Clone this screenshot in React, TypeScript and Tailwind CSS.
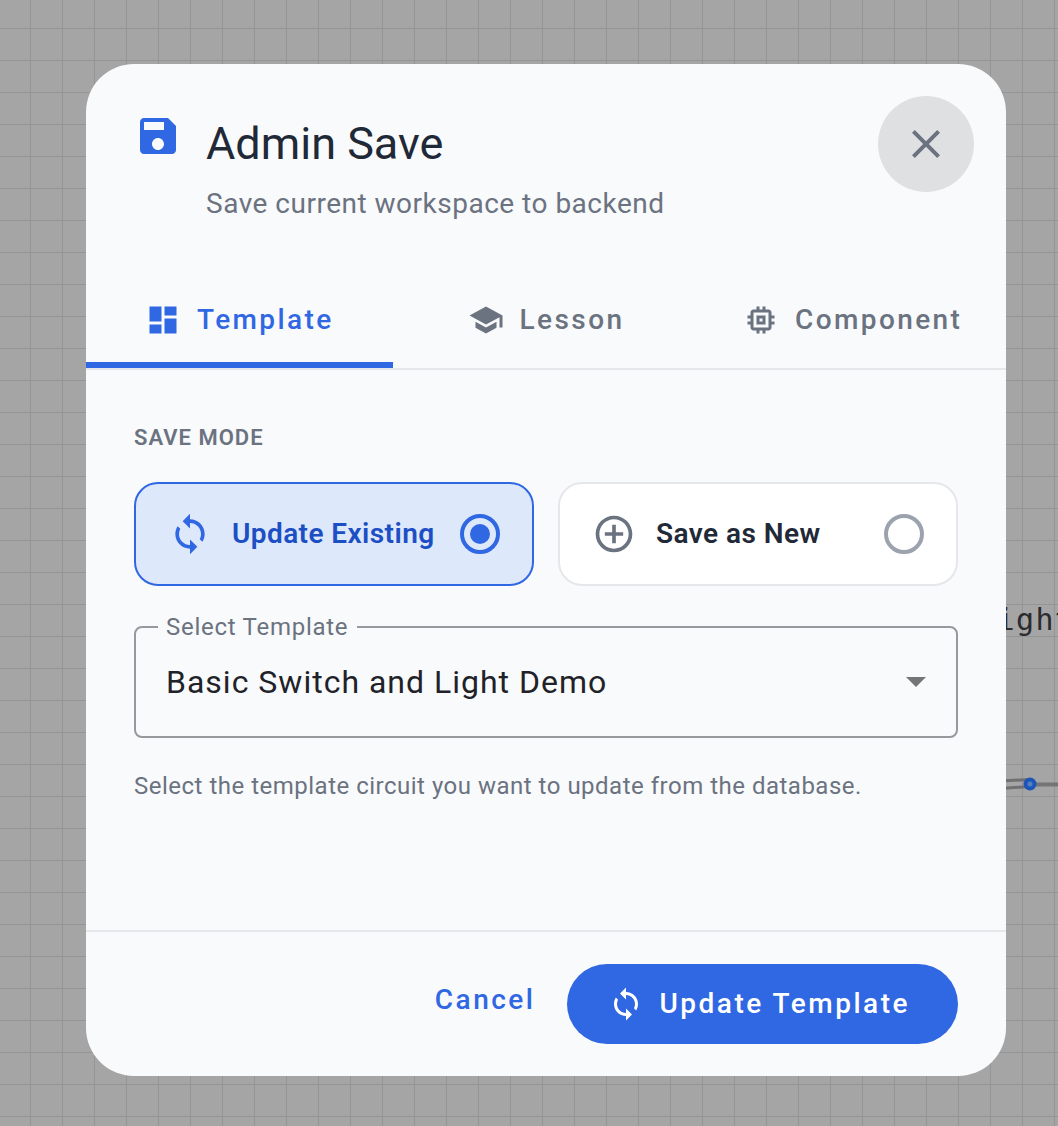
const font = { fontFamily: 'Roboto, sans-serif' };

const Icon = ({ d, className }: { d: string; className: string }) => (
  <svg viewBox="0 0 24 24" fill="currentColor" className={className}>
    <path d={d} />
  </svg>
);

const saveIcon =
  'M17 3H5c-1.11 0-2 .9-2 2v14c0 1.1.89 2 2 2h14c1.1 0 2-.9 2-2V7l-4-4zm-5 16c-1.66 0-3-1.34-3-3s1.34-3 3-3 3 1.34 3 3-1.34 3-3 3zm3-10H5V5h10v4z';
const closeIcon =
  'M19 6.41 17.59 5 12 10.59 6.41 5 5 6.41 10.59 12 5 17.59 6.41 19 12 13.41 17.59 19 19 17.59 13.41 12 19 6.41z';
const dashboardIcon = 'M3 13h8V3H3v10zm0 8h8v-6H3v6zm10 0h8V11h-8v10zm0-18v6h8V3h-8z';
const schoolIcon = 'M5 13.18v4L12 21l7-3.82v-4L12 17l-7-3.82zM12 3 1 9l11 6 9-4.91V17h2V9L12 3z';
const memoryIcon =
  'M15 9H9v6h6V9zm-2 4h-2v-2h2v2zm8-2V9h-2V7c0-1.1-.9-2-2-2h-2V3h-2v2h-2V3H9v2H7c-1.1 0-2 .9-2 2v2H3v2h2v2H3v2h2v2c0 1.1.9 2 2 2h2v2h2v-2h2v2h2v-2h2c1.1 0 2-.9 2-2v-2h2v-2h-2v-2h2zm-4 6H7V7h10v10z';
const syncIcon =
  'M12 4V1L8 5l4 4V6c3.31 0 6 2.69 6 6 0 1.01-.25 1.97-.7 2.8l1.46 1.46C19.54 15.03 20 13.57 20 12c0-4.42-3.58-8-8-8zm0 14c-3.31 0-6-2.69-6-6 0-1.01.25-1.97.7-2.8L5.24 7.74C4.46 8.97 4 10.43 4 12c0 4.42 3.58 8 8 8v3l4-4-4-4v3z';
const addCircleIcon =
  'M13 7h-2v4H7v2h4v4h2v-4h4v-2h-4V7zm-1-5C6.48 2 2 6.48 2 12s4.48 10 10 10 10-4.48 10-10S17.52 2 12 2zm0 18c-4.41 0-8-3.59-8-8s3.59-8 8-8 8 3.59 8 8-3.59 8-8 8z';

const tabs = [
  { label: 'Template', icon: dashboardIcon, active: true },
  { label: 'Lesson', icon: schoolIcon, active: false },
  { label: 'Component', icon: memoryIcon, active: false },
];

const App = () => {
  return (
    <div
      style={font}
      className="relative h-[1126px] w-[1058px] overflow-hidden bg-[#a5a5a6] bg-[linear-gradient(to_right,#959596_1px,transparent_1px),linear-gradient(to_bottom,#959596_1px,transparent_1px)] bg-[size:32px_32px] bg-[position:30px_28px] pl-[86px] pt-[64px]"
    >
      {/* canvas content behind the dialog */}
      <div className="absolute left-[977px] top-[603px] font-['DejaVu_Sans_Mono',monospace] text-[30px] leading-[34px] tracking-[1.4px] text-[#2a2b2d]">
        Light
      </div>
      <svg className="absolute left-[1000px] top-[770px] h-[30px] w-[58px]" viewBox="0 0 58 30">
        <path d="M0 11 L30 9.5 M0 18.5 L30 16.5" stroke="#707072" strokeWidth="3" fill="none" />
        <path d="M30 14.5 H58" stroke="#757577" strokeWidth="4" fill="none" />
        <circle cx="30" cy="14" r="6.5" fill="#1d56b8" />
        <circle cx="30" cy="14" r="2.5" fill="#5a7fc0" />
      </svg>

      <div className="relative flex h-[1012px] w-[920px] flex-col overflow-hidden rounded-[48px] bg-[#f9fafc]">
        <button className="absolute right-[32px] top-[32px] flex h-[96px] w-[96px] items-center justify-center rounded-full bg-[#dfe0e2] text-[#6b7280]">
          <Icon d={closeIcon} className="h-12 w-12" />
        </button>

        <div className="flex h-[206px] items-start pl-[48px] pt-[48px]">
          <Icon d={saveIcon} className="h-12 w-12 text-[#3067e3]" />
          <div className="ml-[24px]">
            <div className="text-[45px] leading-[64px] text-[#1f2937]">Admin Save</div>
            <div className="mt-[12px] text-[28px] leading-[32px] tracking-[0.5px] text-[#6b7280]">
              Save current workspace to backend
            </div>
          </div>
        </div>

        <div className="flex h-[100px] border-b-2 border-[#e5e7eb]">
          {tabs.map((tab) => (
            <div
              key={tab.label}
              className={`flex flex-1 items-center justify-center gap-4 border-b-[6px] pt-[8px] text-[28px] font-medium tracking-[2.4px] ${
                tab.active ? 'border-[#3067e3] text-[#3067e3]' : 'border-transparent text-[#6b7280]'
              }`}
            >
              <Icon d={tab.icon} className="h-9 w-9" />
              <span>{tab.label}</span>
            </div>
          ))}
        </div>

        <div className="flex-1 px-[48px] pt-[54px]">
          <div className="text-[22px] font-semibold leading-[28px] tracking-[1px] text-[#6b7280]">SAVE MODE</div>

          <div className="mt-[30px] flex gap-[24px]">
            <div className="flex h-[104px] flex-1 items-center rounded-[24px] border-2 border-[#3067e3] bg-[#dde8fb] pl-[32px] pr-[32px]">
              <Icon d={syncIcon} className="h-11 w-11 text-[#3067e3]" />
              <span className="ml-[20px] flex-1 text-[28px] font-semibold tracking-[0.42px] text-[#1d4fc4]">
                Update Existing
              </span>
              <div className="flex h-10 w-10 items-center justify-center rounded-full border-4 border-[#3067e3]">
                <div className="h-5 w-5 rounded-full bg-[#3067e3]" />
              </div>
            </div>
            <div className="flex h-[104px] flex-1 items-center rounded-[24px] border-2 border-[#e5e7eb] bg-white pl-[32px] pr-[32px]">
              <Icon d={addCircleIcon} className="h-11 w-11 text-[#6b7280]" />
              <span className="ml-[20px] flex-1 text-[28px] font-semibold tracking-[0.45px] text-[#1f2937]">
                Save as New
              </span>
              <div className="h-10 w-10 rounded-full border-4 border-[#9ca3af]" />
            </div>
          </div>

          <div className="relative mt-[40px] flex h-[112px] items-center justify-between rounded-[8px] border-2 border-[#98999c] pl-[30px] pr-[30px]">
            <span className="absolute left-[22px] top-[-15px] bg-[#f9fafc] pl-[8px] pr-[9px] text-[24px] leading-[28px] tracking-[0.73px] text-[#6b7280]">
              Select Template
            </span>
            <span className="text-[32px] tracking-[1px] text-[#1f2228]">Basic Switch and Light Demo</span>
            <svg viewBox="0 0 20 10" className="h-[10px] w-[20px] text-[#757575]" fill="currentColor">
              <path d="M0 0 H20 L10 10 Z" />
            </svg>
          </div>

          <div className="mt-[32px] text-[24px] leading-[32px] tracking-[0.5px] text-[#6b7280]">
            Select the template circuit you want to update from the database.
          </div>
        </div>

        <div className="flex h-[146px] items-start justify-end border-t-2 border-[#e5e7eb] pr-[48px] pt-[32px]">
          <button className="mr-[31px] flex h-[72px] items-center text-[28px] font-medium tracking-[2.5px] text-[#3067e3]">
            Cancel
          </button>
          <button className="flex h-[80px] items-center gap-4 rounded-full bg-[#3067e3] pl-[41px] pr-[48px] text-[28px] font-medium tracking-[2.5px] text-white">
            <Icon d={syncIcon} className="h-9 w-9" />
            Update Template
          </button>
        </div>
      </div>
    </div>
  );
};

export default App;
